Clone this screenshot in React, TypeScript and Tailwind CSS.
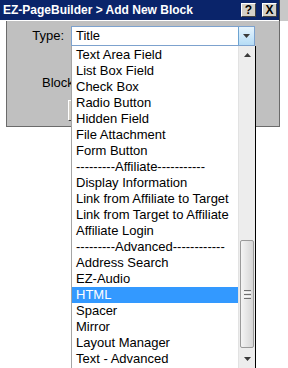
const items = [
  "Text Area Field",
  "List Box Field",
  "Check Box",
  "Radio Button",
  "Hidden Field",
  "File Attachment",
  "Form Button",
  "---------Affiliate-----------",
  "Display Information",
  "Link from Affiliate to Target",
  "Link from Target to Affiliate",
  "Affiliate Login",
  "---------Advanced------------",
  "Address Search",
  "EZ-Audio",
  "HTML",
  "Spacer",
  "Mirror",
  "Layout Manager",
  "Text - Advanced",
];

const Tri = ({ up = false }: { up?: boolean }) => (
  <svg width="7" height="4" viewBox="0 0 7 4" aria-hidden>
    <path d={up ? "M0 4L3.5 0L7 4Z" : "M0 0L7 0L3.5 4Z"} fill="#3a3a3a" />
  </svg>
);

const CapButton = ({ label }: { label: string }) => (
  <div className="w-[15px] h-[14px] bg-[#d4d0c8] border border-t-white border-l-white border-r-[#404040] border-b-[#404040] flex items-center justify-center text-[12px] font-bold leading-none text-black">
    {label}
  </div>
);

const Dropdown = () => (
  <div className="absolute left-[71px] top-[46px] w-[185px] h-[324px] bg-white border-l border-[#a5a5a5] border-r border-r-black flex">
    <ul className="flex-1 pt-px text-[13px] leading-[16px] text-black">
      {items.map((t) => (
        <li
          key={t}
          className={
            t === "HTML"
              ? "h-[16px] pl-[4px] whitespace-nowrap bg-[#3399ff] text-white"
              : "h-[16px] pl-[4px] whitespace-nowrap"
          }
        >
          {t}
        </li>
      ))}
    </ul>
    <div className="w-[17px] flex flex-col bg-[#ededed] border-l border-[#e2e2e2]">
      <div className="h-[17px] flex items-center justify-center">
        <Tri up />
      </div>
      <div className="h-[177px]" />
      <div className="h-[108px] mx-px rounded-[2px] border border-[#9a9a9a] bg-linear-to-r from-[#f4f4f4] to-[#d6d6d6] flex flex-col items-center justify-center gap-[1px]">
        <div className="w-[7px] h-px bg-[#6f6f6f]" />
        <div className="w-[7px] h-px bg-[#f8f8f8]" />
        <div className="w-[7px] h-px bg-[#6f6f6f]" />
        <div className="w-[7px] h-px bg-[#f8f8f8]" />
        <div className="w-[7px] h-px bg-[#6f6f6f]" />
      </div>
      <div className="h-[2px]" />
      <div className="h-[17px] flex items-center justify-center">
        <Tri />
      </div>
    </div>
  </div>
);

export default function App() {
  return (
    <div
      className="relative w-[288px] h-[368px] bg-white overflow-hidden flex"
      style={{ fontFamily: '"Liberation Sans", Arial, sans-serif' }}
    >
      <div className="w-[280px] flex flex-col">
        <div className="h-[21px] flex border-r border-[#404040]">
          <div className="flex-1 h-[20px] bg-[#0a246a] flex items-center pl-[3px] pr-[2px]">
            <span className="text-[12px] font-bold text-white leading-none">
              EZ-PageBuilder &gt; Add New Block
            </span>
            <div className="ml-auto flex gap-[6px]">
              <CapButton label="?" />
              <CapButton label="X" />
            </div>
          </div>
        </div>
        <div className="flex">
          <div className="w-[6px] bg-white" />
          <div className="flex-1 h-[106px] bg-[#c0c0c0] border-l border-b border-r border-[#6b6b6b] text-[13px] leading-[16px] text-black">
            <div className="flex items-center pt-[5px]">
              <span className="w-[57px] text-right">Type:</span>
              <div className="ml-[7px] w-[184px] h-[20px] bg-white border border-[#7da2ce] flex items-center">
                <span className="flex-1 pl-[4px]">Title</span>
                <div className="w-[16px] h-full bg-linear-to-b from-[#e6f4fd] to-[#b5dcf6] border-l border-[#6da3d1] flex items-center justify-center">
                  <Tri />
                </div>
              </div>
            </div>
            <div className="mt-[29px] ml-[35px] w-[29px] overflow-hidden whitespace-nowrap">Block Name:</div>
            <div className="mt-[9px] ml-[61px] w-[40px] h-[21px] bg-[#d4d0c8] border border-l-white border-t-white border-r-[#404040] border-b-[#404040]" />
          </div>
        </div>
      </div>
      <div className="flex-1">
        <div className="h-[21px] bg-[#c8c8c8]" />
      </div>
      <Dropdown />
    </div>
  );
}
